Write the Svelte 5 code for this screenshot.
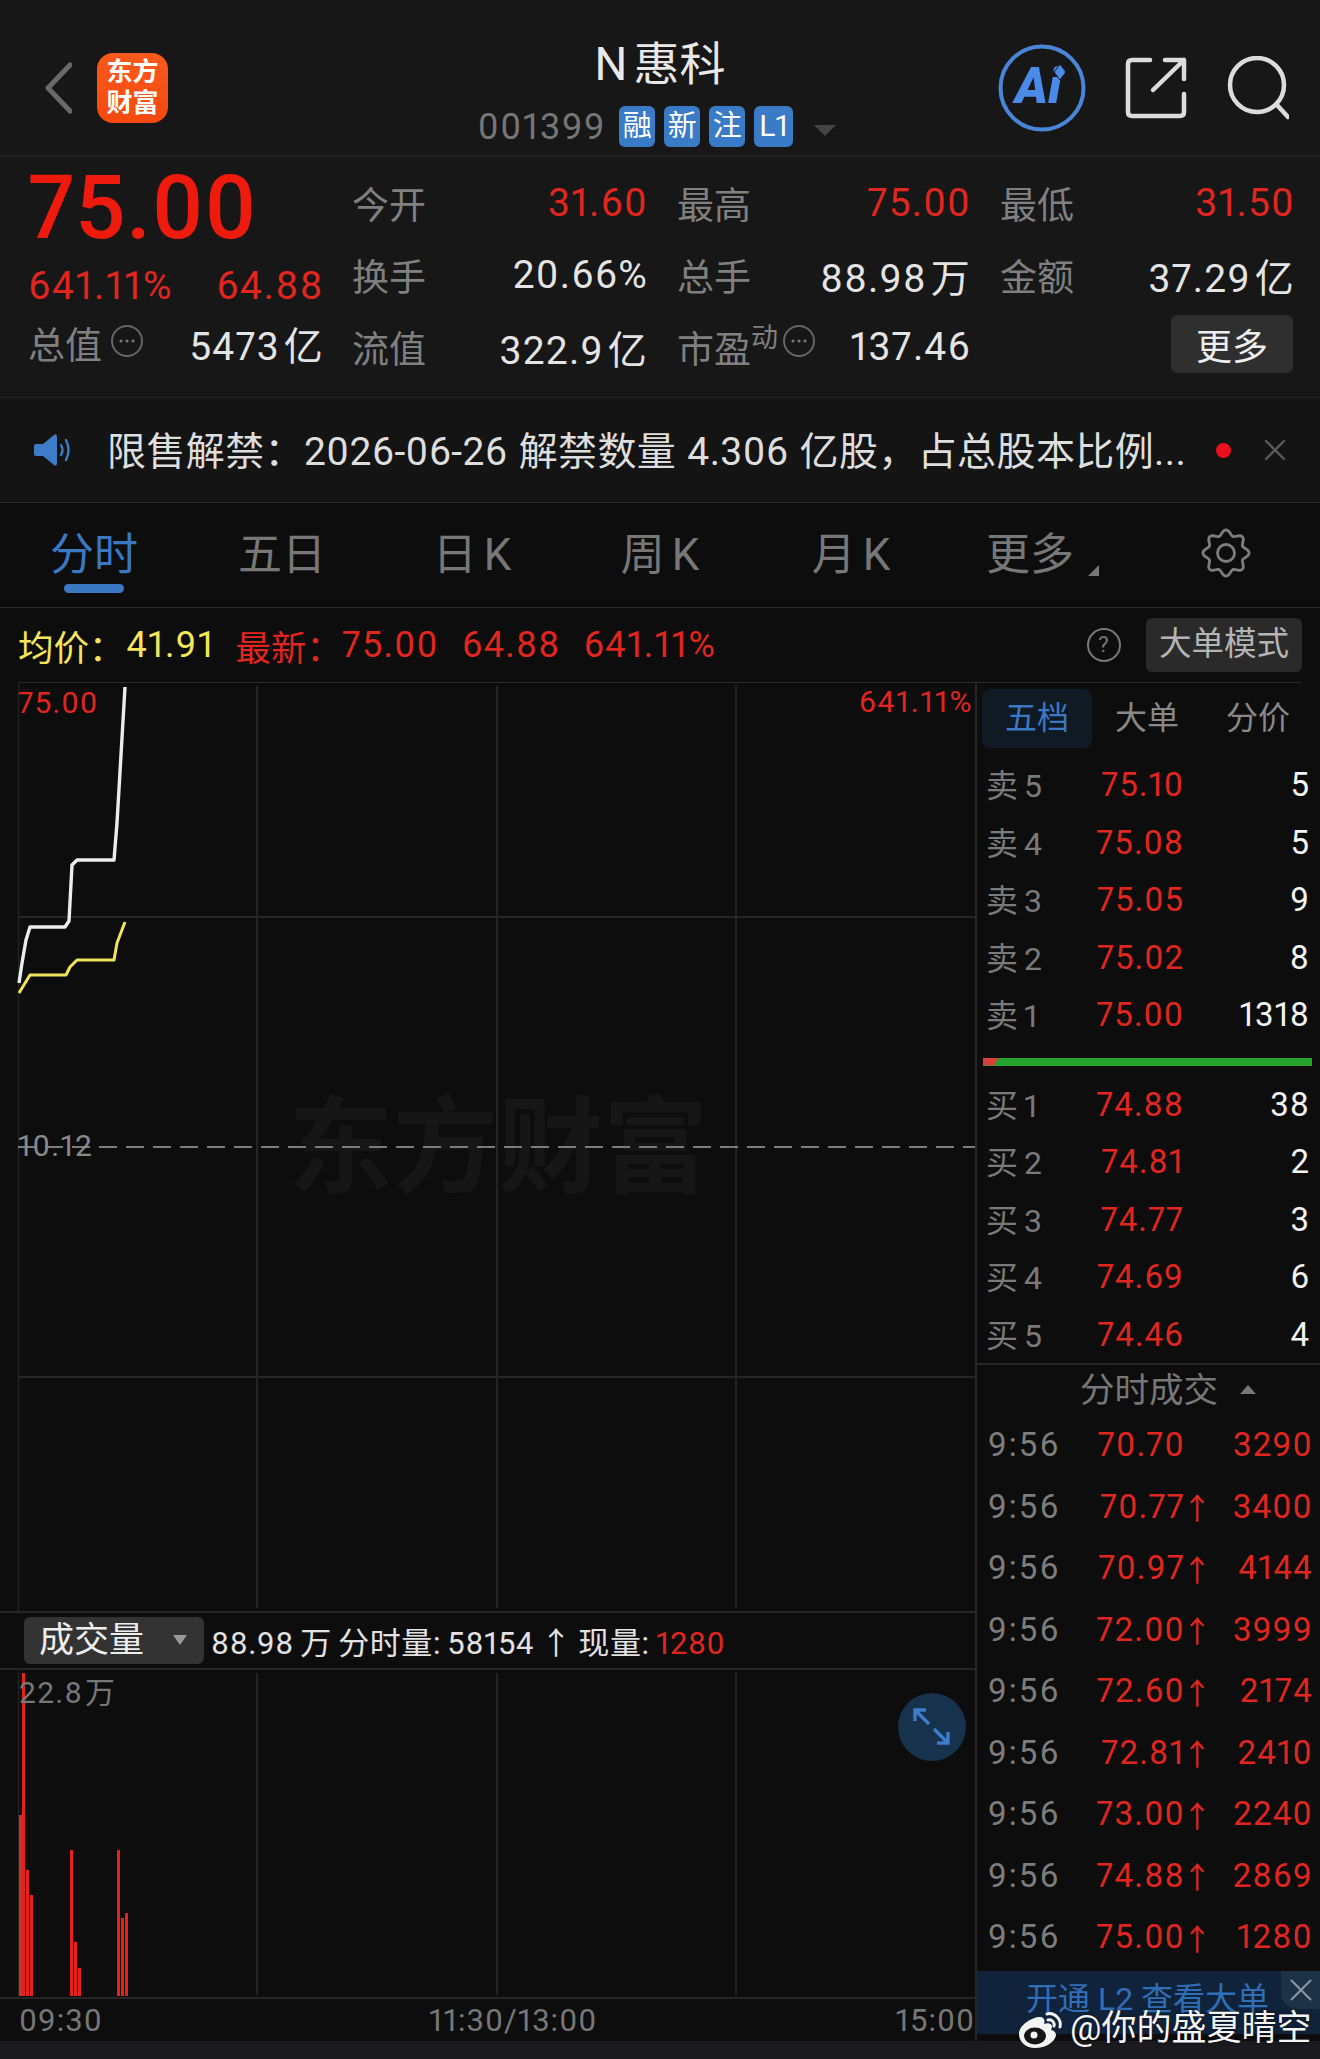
<script lang="ts">
  const stats = [
    { label: "今开", value: "31.60", up: true },
    { label: "最高", value: "75.00", up: true },
    { label: "最低", value: "31.50", up: true },
    { label: "换手", value: "20.66%" },
    { label: "总手", value: "88.98 万" },
    { label: "金额", value: "37.29 亿" },
    { label: "流值", value: "322.9 亿" },
    { label: "市盈", sup: "动", more: true, value: "137.46" },
  ];
  const tabs = ["分时", "五日", "日 K", "周 K", "月 K", "更多"];
  const asks = [
    ["卖", "5", "75.10", "5"],
    ["卖", "4", "75.08", "5"],
    ["卖", "3", "75.05", "9"],
    ["卖", "2", "75.02", "8"],
    ["卖", "1", "75.00", "1318"],
  ];
  const bids = [
    ["买", "1", "74.88", "38"],
    ["买", "2", "74.81", "2"],
    ["买", "3", "74.77", "3"],
    ["买", "4", "74.69", "6"],
    ["买", "5", "74.46", "4"],
  ];
  const trades = [
    ["70.70", "", "3290"],
    ["70.77", "↑", "3400"],
    ["70.97", "↑", "4144"],
    ["72.00", "↑", "3999"],
    ["72.60", "↑", "2174"],
    ["72.81", "↑", "2410"],
    ["73.00", "↑", "2240"],
    ["74.88", "↑", "2869"],
    ["75.00", "↑", "1280"],
  ];
  // x, top of bar, width (page coordinates)
  const bars = [
    [19, 1815, 3, "#c8352c"],
    [22, 1673, 3, "#e5211a"],
    [26, 1870, 3, "#e5211a"],
    [30, 1895, 3, "#e5211a"],
    [70, 1850, 3, "#e5211a"],
    [74, 1942, 3, "#e5211a"],
    [78, 1968, 3, "#e5211a"],
    [117, 1850, 3, "#e5211a"],
    [121, 1918, 3, "#e5211a"],
    [125, 1913, 3, "#e5211a"],
  ];
  const grid = [257, 497, 736];

  const whiteLine = "19,983 22,963 26,940 30,927 65,927 69,921 72,865 77,860 114,860 117,823 125,687";
  const yellowLine = "19,993 30,975 66,975 70,967 77,960 114,960 117,943 125,922";

  // soft toothed outline of the settings icon
  const gearPoints = Array.from({ length: 96 }, (_, i) => {
    const a = (i / 96) * Math.PI * 2;
    const r = 20.5 + 2.6 * Math.cos(8 * a);
    return `${(26 + r * Math.sin(a)).toFixed(1)},${(26 - r * Math.cos(a)).toFixed(1)}`;
  }).join(" ");
</script>

{#snippet dots()}
  <svg class="dots" width="34" height="34" viewBox="0 0 34 34">
    <circle cx="17" cy="17" r="15" fill="none" stroke="#666" stroke-width="2" />
    <circle cx="11" cy="17" r="1.6" fill="#777" />
    <circle cx="17" cy="17" r="1.6" fill="#777" />
    <circle cx="23" cy="17" r="1.6" fill="#777" />
  </svg>
{/snippet}

{#snippet bookRow(row)}
  <div class="book-row">
    <span class="book-label">{row[0]}<i>{row[1]}</i></span>
    <span class="red right">{row[2]}</span>
    <span class="white right">{row[3]}</span>
  </div>
{/snippet}

<div class="app">
  <header class="header">
    <div class="head-left">
      <svg width="28" height="52" viewBox="0 0 28 52">
        <polyline points="26,3 4,26 26,49" fill="none" stroke="#6a6a6a" stroke-width="5" stroke-linecap="round" stroke-linejoin="round" />
      </svg>
      <div class="logo">东方<br />财富</div>
    </div>
    <div class="head-mid">
      <div class="title">N 惠科</div>
      <div class="sub">
        <span class="code">001399</span>
        <span class="badge">融</span>
        <span class="badge">新</span>
        <span class="badge">注</span>
        <span class="badge wide">L1</span>
        <span class="caret"></span>
      </div>
    </div>
    <div class="head-right">
      <svg width="90" height="90" viewBox="0 0 90 90">
        <circle cx="45" cy="45" r="41.5" fill="none" stroke="#4a86d8" stroke-width="4" />
        <text x="18" y="60" class="ai">Ai</text>
        <path d="M63 21 L69 29 L63 37 L57 29 Z" fill="#4a8ae8" stroke="#171717" stroke-width="1" />
      </svg>
      <svg width="64" height="64" viewBox="0 0 64 64" fill="none" stroke="#dcdcdc" stroke-width="4.5" stroke-linecap="round" stroke-linejoin="round">
        <path d="M26 4 H8 Q4 4 4 8 V56 Q4 60 8 60 H56 Q60 60 60 56 V38" />
        <path d="M29 34 L60 4 M41 4 H60 V23" />
      </svg>
      <svg width="64" height="64" viewBox="0 0 64 64" fill="none" stroke="#dcdcdc" stroke-width="4.5" stroke-linecap="round">
        <circle cx="32" cy="29" r="27" />
        <path d="M52 49 L63 61" />
      </svg>
    </div>
  </header>

  <section class="quote">
    <div class="price-box">
      <div class="price">75.00</div>
      <div class="change"><span>641.11%</span><span>64.88</span></div>
      <div class="total">
        <span class="label with-icon">总值{@render dots()}</span>
        <span class="white2 val">5473 亿</span>
      </div>
    </div>
    <div class="stats">
      {#each stats as s}
        <div class="stat">
          <span class="label with-icon">
            {s.label}{#if s.sup}<sup>{s.sup}</sup>{/if}{#if s.more}{@render dots()}{/if}
          </span>
          <span class="val {s.up ? 'red' : 'white2'}">{s.value}</span>
        </div>
      {/each}
      <div class="stat end"><button class="more">更多</button></div>
    </div>
  </section>

  <section class="notice">
    <svg width="60" height="50" viewBox="0 0 60 50">
      <path d="M11 19 H18 L29 10 Q32 8 32 12 V38 Q32 42 29 40 L18 31 H11 Q9 31 9 29 V21 Q9 19 11 19 Z" fill="#3d7cc9" />
      <path d="M36 20 Q39 25 36 30 M41 15 Q46 25 41 35" fill="none" stroke="#3d7cc9" stroke-width="2.4" stroke-linecap="round" />
    </svg>
    <span class="notice-text">限售解禁：2026-06-26 解禁数量 4.306 亿股，占总股本比例...</span>
    <span class="dot"></span>
    <svg class="close" width="24" height="24" viewBox="0 0 24 24">
      <path d="M3 3 L21 21 M21 3 L3 21" stroke="#5a5a5a" stroke-width="2.4" stroke-linecap="round" />
    </svg>
  </section>

  <nav class="tabs">
    {#each tabs as t, i}
      <span class="tab" class:active={i === 0} class:has-caret={t === "更多"}>{t}</span>
    {/each}
    <svg class="gear" width="52" height="52" viewBox="0 0 52 52" fill="none" stroke="#7d7d7d" stroke-width="2.8">
      <polygon points={gearPoints} stroke-linejoin="round" />
      <circle cx="26" cy="26" r="8.5" />
    </svg>
  </nav>

  <section class="info">
    <span class="yellow lab">均价：</span>
    <span class="yellow avg">41.91</span>
    <span class="red lab latest">最新：</span>
    <span class="red">75.00</span>
    <span class="red gap">64.88</span>
    <span class="red gap">641.11%</span>
    <svg class="help" width="36" height="36" viewBox="0 0 36 36">
      <circle cx="18" cy="18" r="16" fill="none" stroke="#777" stroke-width="2" />
      <text x="18" y="25" text-anchor="middle" class="help-mark">?</text>
    </svg>
    <span class="mode">大单模式</span>
  </section>

  <div class="body">
    <div class="charts">
      <div class="price-chart">
        <svg width="975" height="930" viewBox="0 683 975 930">
          <line x1="18.5" y1="683" x2="18.5" y2="1613" stroke="#232323" stroke-width="1.5" />
          {#each grid as x}
            <line x1={x} y1="686" x2={x} y2="1608" stroke="#242424" stroke-width="2" />
          {/each}
          <line x1="18" y1="917" x2="975" y2="917" stroke="#262626" stroke-width="2" />
          <line x1="18" y1="1377" x2="975" y2="1377" stroke="#262626" stroke-width="2" />
          <text x="288" y="1184" class="mark">东方财富</text>
          <line x1="18" y1="1147" x2="975" y2="1147" stroke="#7c7c7c" stroke-width="2" stroke-dasharray="18 9" />
          <polyline points={whiteLine} fill="none" stroke="#ececec" stroke-width="3.4" stroke-linejoin="round" />
          <polyline points={yellowLine} fill="none" stroke="#f2e35c" stroke-width="3" stroke-linejoin="round" />
        </svg>
        <span class="axis-tl red">75.00</span>
        <span class="axis-tr red">641.11%</span>
        <span class="axis-mid">10.12</span>
      </div>

      <div class="vol-bar">
        <div class="vol-select">成交量<span class="vol-caret"></span></div>
        <span class="vol-text">88.98 万 分时量: 58154 ↑ 现量: <span class="red">1280</span></span>
      </div>

      <div class="vol-chart">
        <svg width="975" height="327" viewBox="0 1670 975 327">
          <line x1="18.5" y1="1670" x2="18.5" y2="1997" stroke="#232323" stroke-width="1.5" />
          {#each grid as x}
            <line x1={x} y1="1673" x2={x} y2="1995" stroke="#242424" stroke-width="2" />
          {/each}
          {#each bars as [x, top, w, fill]}
            <rect {x} y={top} width={w} height={1996 - Number(top)} {fill} />
          {/each}
        </svg>
        <span class="vol-max">22.8 万</span>
        <button class="expand" aria-label="expand">
          <svg width="68" height="68" viewBox="0 0 68 68" fill="none" stroke="#3d7cc9" stroke-width="3.4">
            <path d="M17 28 V17 H28 M17 17 L31 31" />
            <path d="M50 39 V50 H39 M50 50 L36 36" />
          </svg>
        </button>
      </div>

      <div class="time-axis"><span>09:30</span><span class="mid">11:30/13:00</span><span>15:00</span></div>
    </div>

    <aside class="book">
      <div class="book-tabs">
        <span class="book-tab active">五档</span>
        <span class="book-tab">大单</span>
        <span class="book-tab">分价</span>
      </div>
      {#each asks as row}{@render bookRow(row)}{/each}
      <div class="ratio"><span class="ratio-red"></span></div>
      {#each bids as row}{@render bookRow(row)}{/each}
      <div class="trade-head">分时成交<span class="up-caret"></span></div>
      {#each trades as [p, arrow, q]}
        <div class="trade">
          <span class="time">9:56</span>
          <span class="red right">{p}</span>
          <span class="red arrow">{arrow}</span>
          <span class="red right">{q}</span>
        </div>
      {/each}
      <div class="promo">
        开通 L2 查看大单
        <span class="promo-close">
          <svg width="24" height="24" viewBox="0 0 24 24"><path d="M2 2 L22 22 M22 2 L2 22" stroke="#8a95a0" stroke-width="2.2" /></svg>
        </span>
      </div>
    </aside>
  </div>
  <div class="footer"></div>

  <div class="weibo">
    <svg width="48" height="40" viewBox="0 0 48 40">
      <path d="M3 25 C3 16 16 8 24 8 C29 8 29 13 28 15 C34 13 38 16 35 21 C40 22 41 26 39 29 C36 35 28 39 19 39 C10 39 3 33 3 25 Z" fill="#f4f4f4" />
      <ellipse cx="19" cy="27" rx="11" ry="8.5" fill="#151515" />
      <circle cx="18" cy="26" r="3.5" fill="#f4f4f4" />
      <path d="M31 5 C38 3 46 10 44 18 M32 11 C36 10 39 14 38 17" fill="none" stroke="#f4f4f4" stroke-width="3" stroke-linecap="round" />
    </svg>
    <span>@你的盛夏晴空</span>
  </div>
</div>

<style>
  :global(body) {
    margin: 0;
    background: #0d0d0d;
  }

  .app {
    position: relative;
    width: 1320px;
    height: 2059px;
    overflow: hidden;
    display: flex;
    flex-direction: column;
    background: #0d0d0d;
    color: #e6e6e6;
    font-family: Roboto, "Noto Sans CJK SC", sans-serif;
    font-feature-settings: "pnum";
  }

  .red { color: #e0261e; }
  .white { color: #f4f4f4; }
  .white2 { color: #e4e4e4; }
  .yellow { color: #f5e65c; }
  .right { text-align: right; }

  /* header */
  .header {
    flex: none;
    box-sizing: border-box;
    padding-top: 20px;
    border-bottom: 2px solid #232323;
    background: #171717;
    display: grid;
    grid-template-columns: 1fr auto 1fr;
    align-items: center;
    height: 157px;
  }
  .head-left {
    display: flex;
    align-items: center;
    gap: 25px;
    padding-left: 44px;
  }
  .logo {
    width: 71px;
    height: 70px;
    border-radius: 16px;
    background: linear-gradient(180deg, #fb5a1c, #f4480f);
    color: #fff;
    font-weight: 700;
    font-size: 26px;
    line-height: 31px;
    text-align: center;
    box-sizing: border-box;
    padding-top: 4px;
  }
  .head-mid {
    text-align: center;
    margin-top: 8px;
  }
  .title {
    font-size: 46px;
    line-height: 56px;
    color: #e8e8e8;
    word-spacing: -5px;
  }
  .sub {
    display: flex;
    align-items: center;
    margin: 14px 3px 0 -3px;
    height: 41px;
  }
  .code {
    font-size: 36px;
    color: #767676;
    margin-right: 13px;
    letter-spacing: 1.6px;
  }
  .badge {
    width: 36px;
    height: 41px;
    margin-right: 9px;
    border-radius: 6px;
    background: #3a7bc8;
    color: #fff;
    font-size: 29px;
    line-height: 40px;
    text-align: center;
  }
  .badge.wide { width: 39px; font-size: 30px; margin-right: 21px; }
  .caret {
    width: 0;
    height: 0;
    border-left: 11px solid transparent;
    border-right: 11px solid transparent;
    border-top: 11px solid #444;
    margin-top: 8px;
  }
  .head-right {
    display: flex;
    justify-content: flex-end;
    align-items: center;
    gap: 37px;
    padding-right: 31px;
  }
  .ai {
    font: italic 900 50px Roboto, sans-serif;
    fill: #4a8ae8;
  }

  /* quote */
  .quote {
    height: 240px;
    flex: none;
    background: #171717;
    display: flex;
    padding-left: 28px;
    box-sizing: border-box;
    font-size: 39px;
    letter-spacing: 1.2px;
    word-spacing: -7px;
  }
  .val { margin-right: -2px; }
  .price-box {
    width: 294px;
    flex: none;
    padding-top: 7px;
  }
  .price {
    font-size: 89px;
    font-weight: 500;
    line-height: 88px;
    color: #ef1a0e;
    letter-spacing: 0.5px;
  }
  .change {
    display: flex;
    justify-content: space-between;
    margin-top: 12px;
    line-height: 44px;
    color: #e0261e;
    letter-spacing: 1.6px;
  }
  .change span:last-child { margin-right: -2px; }
  .total {
    display: flex;
    justify-content: space-between;
    margin-top: 17px;
    line-height: 44px;
  }
  .label {
    color: #808080;
    font-size: 37px;
    letter-spacing: 0;
  }
  .with-icon {
    display: flex;
    align-items: center;
  }
  .dots {
    margin: -12px 0 0 8px;
  }
  sup {
    font-size: 27px;
    line-height: 1;
    margin: -18px 0 0 0;
    vertical-align: baseline;
    color: #808080;
  }
  .with-icon :global(sup + .dots) {
    margin-left: 4px;
  }
  .stats {
    margin: 10px 0 0 30px;
    display: grid;
    grid-template-columns: 294px 292px 293px;
    grid-auto-rows: 72px;
    column-gap: 31px;
    align-items: center;
  }
  .stat {
    display: flex;
    justify-content: space-between;
    align-items: center;
  }
  .stat.end { justify-content: flex-end; }
  .more {
    width: 122px;
    height: 58px;
    margin-top: -6px;
    border: none;
    border-radius: 6px;
    background: #2f2f2f;
    color: #eee;
    font: inherit;
    font-size: 36px;
    letter-spacing: 0;
    padding: 0;
  }

  /* notice */
  .notice {
    height: 106px;
    flex: none;
    box-sizing: border-box;
    border-top: 1px solid #242424;
    border-bottom: 1px solid #2a2a2a;
    background: #141414;
    display: flex;
    align-items: center;
    padding-left: 25px;
  }
  .notice-text {
    margin: -4px 0 0 22px;
    font-size: 39px;
    letter-spacing: 0.4px;
    word-spacing: 1px;
    color: #dedede;
    white-space: nowrap;
  }
  .dot {
    width: 15px;
    height: 15px;
    border-radius: 50%;
    background: #ee0f1c;
    margin-left: auto;
  }
  .close { margin: 0 33px 0 32px; }

  /* tabs */
  .tabs {
    height: 105px;
    flex: none;
    box-sizing: border-box;
    border-bottom: 1px solid #2a2a2a;
    display: flex;
    align-items: center;
  }
  .tab {
    position: relative;
    width: 188px;
    flex: none;
    margin-top: -8px;
    text-align: center;
    font-size: 44px;
    word-spacing: -4px;
    color: #777;
  }
  .tab:nth-child(3) { margin-left: 2px; }
  .tab:nth-child(5) { margin-left: 3px; }
  .tab:nth-child(6) { margin-left: -9px; }
  .tab.active { color: #3b78c4; }
  .tab.active::after {
    content: "";
    position: absolute;
    left: 64px;
    top: 65px;
    width: 60px;
    height: 9px;
    border-radius: 5px;
    background: #3b78c4;
  }
  .tab.has-caret::after {
    content: "";
    position: absolute;
    left: 152px;
    top: 46px;
    width: 0;
    height: 0;
    border-left: 11px solid transparent;
    border-bottom: 11px solid #777;
  }
  .gear { margin-left: 76px; margin-top: -4px; }

  /* info row */
  .info {
    height: 75px;
    flex: none;
    box-sizing: border-box;
    margin: 0 18px;
    border-bottom: 1px solid #2a2a2a;
    display: flex;
    align-items: center;
    font-size: 36px;
    letter-spacing: 1.3px;
  }
  .lab { font-size: 35.5px; letter-spacing: 0; }
  .avg { margin-left: 2px; }
  .latest { margin-left: 21px; }
  .gap { margin-left: 23px; }
  .help { margin-left: auto; }
  .help-mark {
    font: 22px Roboto, sans-serif;
    fill: #777;
  }
  .mode {
    margin-left: 24px;
    width: 156px;
    height: 54px;
    border-radius: 6px;
    background: #2a2a2a;
    color: #b4b4b4;
    font-size: 32.5px;
    letter-spacing: 0;
    line-height: 53px;
    text-align: center;
  }

  /* body */
  .body {
    flex: 1;
    min-height: 0;
    display: flex;
  }
  .charts {
    width: 975px;
    flex: none;
    box-sizing: content-box;
    border-right: 2px solid #262626;
    display: flex;
    flex-direction: column;
  }
  .price-chart {
    position: relative;
    height: 930px;
    flex: none;
    box-sizing: border-box;
    border-bottom: 2px solid #262626;
  }
  .price-chart svg,
  .vol-chart svg {
    display: block;
  }
  .mark {
    font-size: 105px;
    font-weight: 700;
    fill: #161616;
    font-family: "Noto Sans CJK SC", sans-serif;
  }
  .axis-tl, .axis-tr, .axis-mid, .vol-max {
    position: absolute;
    font-size: 30px;
    line-height: 36px;
    letter-spacing: 1px;
  }
  .axis-tl { left: 18px; top: 2px; }
  .axis-tr { right: 2px; top: 1px; letter-spacing: 1.6px; }
  .axis-mid { left: 18px; top: 445px; color: #8a8a8a; letter-spacing: 1.4px; }

  .vol-bar {
    height: 57px;
    flex: none;
    box-sizing: border-box;
    border-bottom: 2px solid #262626;
    padding-left: 24px;
    display: flex;
    align-items: center;
  }
  .vol-select {
    position: relative;
    width: 180px;
    height: 47px;
    box-sizing: border-box;
    padding-left: 15px;
    border-radius: 6px;
    background: #333;
    color: #eee;
    font-size: 35px;
    line-height: 47px;
  }
  .vol-caret {
    position: absolute;
    right: 17px;
    top: 18px;
    width: 0;
    height: 0;
    border-left: 7px solid transparent;
    border-right: 7px solid transparent;
    border-top: 10px solid #999;
  }
  .vol-text {
    margin-left: 7px;
    font-size: 31px;
    letter-spacing: 0.6px;
    word-spacing: -2px;
    color: #e2e2e2;
    white-space: pre;
  }

  .vol-chart {
    position: relative;
    height: 329px;
    flex: none;
    box-sizing: border-box;
    border-bottom: 2px solid #262626;
  }
  .vol-max {
    left: 19px;
    top: 5px;
    color: #777;
    letter-spacing: 1.3px;
    word-spacing: -7px;
  }
  .expand {
    position: absolute;
    left: 898px;
    top: 23px;
    width: 68px;
    height: 68px;
    padding: 0;
    border: none;
    border-radius: 50%;
    background: #16324c;
  }
  .time-axis {
    flex: 1;
    display: flex;
    justify-content: space-between;
    align-items: center;
    padding: 0 0 0 19px;
    font-size: 31px;
    letter-spacing: 1px;
    color: #777;
  }
  .time-axis .mid { margin-left: 14px; margin-right: -14px; }

  /* order book */
  .book {
    flex: 1;
    min-width: 0;
    padding-top: 6px;
    display: flex;
    flex-direction: column;
  }
  .book-tabs {
    display: grid;
    grid-template-columns: 110px 110px 112px;
    margin-left: 5px;
    height: 59px;
    margin-bottom: 8px;
  }
  .book-tab {
    font-size: 32px;
    line-height: 59px;
    color: #888;
    text-align: center;
    border-radius: 8px;
  }
  .book-tab.active {
    background: #101a24;
    color: #3b78c4;
  }
  .book-row {
    height: 57.5px;
    flex: none;
    box-sizing: border-box;
    padding: 0 10px 0 9px;
    display: grid;
    grid-template-columns: 90px 108px 1fr;
    align-items: center;
    font-size: 33px;
    letter-spacing: 1px;
  }
  .book-label {
    color: #7a7a7a;
    font-size: 32px;
    margin-top: -3px;
    letter-spacing: 0;
  }
  .book-label i {
    font-style: normal;
    margin-left: 6px;
  }
  .ratio {
    position: relative;
    height: 8px;
    flex: none;
    margin: 14px 8px 10px 6px;
    background: #23a32b;
  }
  .ratio-red {
    position: absolute;
    left: 0;
    top: 0;
    width: 16px;
    height: 8px;
    background: #d8403a;
    clip-path: polygon(0 0, 100% 0, 70% 100%, 0 100%);
  }
  .trade-head {
    height: 51px;
    flex: none;
    box-sizing: border-box;
    border-top: 2px solid #262626;
    padding-left: 103px;
    font-size: 34.5px;
    line-height: 50px;
    color: #777;
    display: flex;
    align-items: center;
  }
  .up-caret {
    width: 0;
    height: 0;
    margin-left: 22px;
    border-left: 8px solid transparent;
    border-right: 8px solid transparent;
    border-bottom: 9px solid #777;
  }
  .trade {
    height: 61.5px;
    flex: none;
    box-sizing: border-box;
    padding: 0 7px 0 11px;
    display: grid;
    grid-template-columns: 90px 107px 23px 1fr;
    align-items: center;
    font-size: 33px;
    letter-spacing: 1.2px;
  }
  .time { color: #7d7d7d; letter-spacing: 2px; }
  .arrow { font-size: 30px; margin-left: -3px; }
  .promo {
    position: relative;
    height: 63px;
    flex: none;
    margin-top: 3px;
    background: #11233a;
    color: #2f6fb8;
    font-size: 32px;
    line-height: 56px;
    padding-left: 49px;
    box-sizing: border-box;
    white-space: nowrap;
  }
  .promo-close {
    position: absolute;
    right: 0;
    top: 0;
    width: 39px;
    height: 38px;
    border-bottom-left-radius: 16px;
    background: #1e3247;
    display: flex;
    align-items: center;
    justify-content: center;
  }

  .footer {
    height: 18px;
    flex: none;
    background: #1a1a1f;
  }
  .weibo {
    position: absolute;
    left: 1016px;
    top: 2008px;
    display: flex;
    align-items: center;
    gap: 6px;
    color: #f5f5f5;
    font-size: 35px;
    line-height: 42px;
    text-shadow: 0 0 3px rgba(0, 0, 0, 0.6);
  }
</style>
